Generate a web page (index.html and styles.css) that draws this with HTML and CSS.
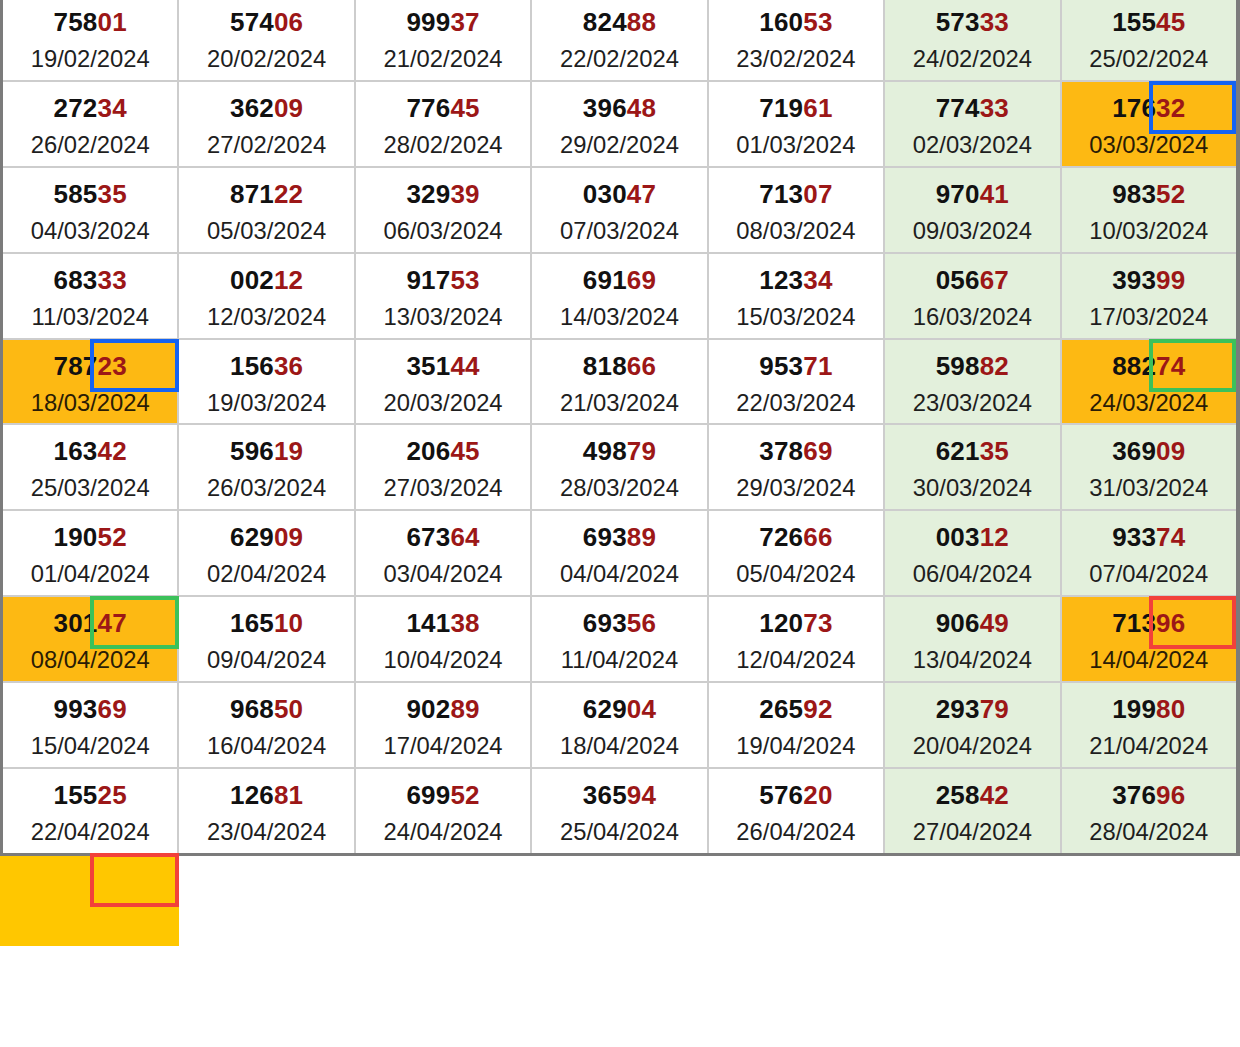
FILE: index.html
```html
<!DOCTYPE html>
<html>
<head>
<meta charset="utf-8">
<link rel="stylesheet" href="styles.css">
</head>
<body>
<div class="table">
  <div class="cell"><div class="num">758<span class="r">01</span></div><div class="date">19/02/2024</div></div>
  <div class="cell"><div class="num">574<span class="r">06</span></div><div class="date">20/02/2024</div></div>
  <div class="cell"><div class="num">999<span class="r">37</span></div><div class="date">21/02/2024</div></div>
  <div class="cell"><div class="num">824<span class="r">88</span></div><div class="date">22/02/2024</div></div>
  <div class="cell"><div class="num">160<span class="r">53</span></div><div class="date">23/02/2024</div></div>
  <div class="cell green"><div class="num">573<span class="r">33</span></div><div class="date">24/02/2024</div></div>
  <div class="cell green"><div class="num">155<span class="r">45</span></div><div class="date">25/02/2024</div></div>

  <div class="cell"><div class="num">272<span class="r">34</span></div><div class="date">26/02/2024</div></div>
  <div class="cell"><div class="num">362<span class="r">09</span></div><div class="date">27/02/2024</div></div>
  <div class="cell"><div class="num">776<span class="r">45</span></div><div class="date">28/02/2024</div></div>
  <div class="cell"><div class="num">396<span class="r">48</span></div><div class="date">29/02/2024</div></div>
  <div class="cell"><div class="num">719<span class="r">61</span></div><div class="date">01/03/2024</div></div>
  <div class="cell green"><div class="num">774<span class="r">33</span></div><div class="date">02/03/2024</div></div>
  <div class="cell hit"><div class="num">176<span class="r">32</span></div><div class="date">03/03/2024</div><span class="box blue edge-r"></span></div>

  <div class="cell"><div class="num">585<span class="r">35</span></div><div class="date">04/03/2024</div></div>
  <div class="cell"><div class="num">871<span class="r">22</span></div><div class="date">05/03/2024</div></div>
  <div class="cell"><div class="num">329<span class="r">39</span></div><div class="date">06/03/2024</div></div>
  <div class="cell"><div class="num">030<span class="r">47</span></div><div class="date">07/03/2024</div></div>
  <div class="cell"><div class="num">713<span class="r">07</span></div><div class="date">08/03/2024</div></div>
  <div class="cell green"><div class="num">970<span class="r">41</span></div><div class="date">09/03/2024</div></div>
  <div class="cell green"><div class="num">983<span class="r">52</span></div><div class="date">10/03/2024</div></div>

  <div class="cell"><div class="num">683<span class="r">33</span></div><div class="date">11/03/2024</div></div>
  <div class="cell"><div class="num">002<span class="r">12</span></div><div class="date">12/03/2024</div></div>
  <div class="cell"><div class="num">917<span class="r">53</span></div><div class="date">13/03/2024</div></div>
  <div class="cell"><div class="num">691<span class="r">69</span></div><div class="date">14/03/2024</div></div>
  <div class="cell"><div class="num">123<span class="r">34</span></div><div class="date">15/03/2024</div></div>
  <div class="cell green"><div class="num">056<span class="r">67</span></div><div class="date">16/03/2024</div></div>
  <div class="cell green"><div class="num">393<span class="r">99</span></div><div class="date">17/03/2024</div></div>

  <div class="cell hit"><div class="num">787<span class="r">23</span></div><div class="date">18/03/2024</div><span class="box blue"></span></div>
  <div class="cell"><div class="num">156<span class="r">36</span></div><div class="date">19/03/2024</div></div>
  <div class="cell"><div class="num">351<span class="r">44</span></div><div class="date">20/03/2024</div></div>
  <div class="cell"><div class="num">818<span class="r">66</span></div><div class="date">21/03/2024</div></div>
  <div class="cell"><div class="num">953<span class="r">71</span></div><div class="date">22/03/2024</div></div>
  <div class="cell green"><div class="num">598<span class="r">82</span></div><div class="date">23/03/2024</div></div>
  <div class="cell hit"><div class="num">882<span class="r">74</span></div><div class="date">24/03/2024</div><span class="box grn edge-r"></span></div>

  <div class="cell"><div class="num">163<span class="r">42</span></div><div class="date">25/03/2024</div></div>
  <div class="cell"><div class="num">596<span class="r">19</span></div><div class="date">26/03/2024</div></div>
  <div class="cell"><div class="num">206<span class="r">45</span></div><div class="date">27/03/2024</div></div>
  <div class="cell"><div class="num">498<span class="r">79</span></div><div class="date">28/03/2024</div></div>
  <div class="cell"><div class="num">378<span class="r">69</span></div><div class="date">29/03/2024</div></div>
  <div class="cell green"><div class="num">621<span class="r">35</span></div><div class="date">30/03/2024</div></div>
  <div class="cell green"><div class="num">369<span class="r">09</span></div><div class="date">31/03/2024</div></div>

  <div class="cell"><div class="num">190<span class="r">52</span></div><div class="date">01/04/2024</div></div>
  <div class="cell"><div class="num">629<span class="r">09</span></div><div class="date">02/04/2024</div></div>
  <div class="cell"><div class="num">673<span class="r">64</span></div><div class="date">03/04/2024</div></div>
  <div class="cell"><div class="num">693<span class="r">89</span></div><div class="date">04/04/2024</div></div>
  <div class="cell"><div class="num">726<span class="r">66</span></div><div class="date">05/04/2024</div></div>
  <div class="cell green"><div class="num">003<span class="r">12</span></div><div class="date">06/04/2024</div></div>
  <div class="cell green"><div class="num">933<span class="r">74</span></div><div class="date">07/04/2024</div></div>

  <div class="cell hit"><div class="num">301<span class="r">47</span></div><div class="date">08/04/2024</div><span class="box grn"></span></div>
  <div class="cell"><div class="num">165<span class="r">10</span></div><div class="date">09/04/2024</div></div>
  <div class="cell"><div class="num">141<span class="r">38</span></div><div class="date">10/04/2024</div></div>
  <div class="cell"><div class="num">693<span class="r">56</span></div><div class="date">11/04/2024</div></div>
  <div class="cell"><div class="num">120<span class="r">73</span></div><div class="date">12/04/2024</div></div>
  <div class="cell green"><div class="num">906<span class="r">49</span></div><div class="date">13/04/2024</div></div>
  <div class="cell hit"><div class="num">713<span class="r">96</span></div><div class="date">14/04/2024</div><span class="box red edge-r"></span></div>

  <div class="cell"><div class="num">993<span class="r">69</span></div><div class="date">15/04/2024</div></div>
  <div class="cell"><div class="num">968<span class="r">50</span></div><div class="date">16/04/2024</div></div>
  <div class="cell"><div class="num">902<span class="r">89</span></div><div class="date">17/04/2024</div></div>
  <div class="cell"><div class="num">629<span class="r">04</span></div><div class="date">18/04/2024</div></div>
  <div class="cell"><div class="num">265<span class="r">92</span></div><div class="date">19/04/2024</div></div>
  <div class="cell green"><div class="num">293<span class="r">79</span></div><div class="date">20/04/2024</div></div>
  <div class="cell green"><div class="num">199<span class="r">80</span></div><div class="date">21/04/2024</div></div>

  <div class="cell"><div class="num">155<span class="r">25</span></div><div class="date">22/04/2024</div></div>
  <div class="cell"><div class="num">126<span class="r">81</span></div><div class="date">23/04/2024</div></div>
  <div class="cell"><div class="num">699<span class="r">52</span></div><div class="date">24/04/2024</div></div>
  <div class="cell"><div class="num">365<span class="r">94</span></div><div class="date">25/04/2024</div></div>
  <div class="cell"><div class="num">576<span class="r">20</span></div><div class="date">26/04/2024</div></div>
  <div class="cell green"><div class="num">258<span class="r">42</span></div><div class="date">27/04/2024</div></div>
  <div class="cell green"><div class="num">376<span class="r">96</span></div><div class="date">28/04/2024</div></div>
</div>
<div class="next">
  <span class="box red next-box"></span>
</div>
</body>
</html>
```
FILE: styles.css
```css
html, body {
  margin: 0;
  padding: 0;
  background: #ffffff;
}

body {
  width: 1240px;
  height: 1047px;
  overflow: hidden;
  font-family: "Liberation Sans", Arial, sans-serif;
}

.table {
  margin-top: -4px;
  width: 1240px;
  box-sizing: border-box;
  display: grid;
  grid-template-columns: repeat(7, 1fr);
  grid-auto-rows: 83.9px;
  gap: 2px;
  background: #cdcdcd;
  border-left: 3px solid #7b7b7b;
  border-right: 4px solid #7b7b7b;
  border-bottom: 3px solid #7b7b7b;
}

.cell {
  position: relative;
  background: #ffffff;
  display: flex;
  flex-direction: column;
  align-items: center;
  padding-top: 11px;
  box-sizing: border-box;
}

.cell.green {
  background: #e3f0dc;
}

.cell.hit {
  background: #fdb913;
}

.num {
  font-weight: bold;
  font-size: 26px;
  line-height: 30px;
  color: #111111;
  letter-spacing: 0.2px;
}

.r {
  color: #9c1717;
}

.date {
  margin-top: 7px;
  font-size: 23.8px;
  line-height: 30px;
  color: #1e1e1e;
}

.cell.hit .date {
  color: #2a1c05;
}

.box {
  position: absolute;
  box-sizing: border-box;
  border: 4px solid;
  top: -1px;
  left: 87px;
  width: 89px;
  height: 53px;
}

.box.edge-r {
  left: 87px;
  width: 87px;
}

.box.blue {
  border-color: #1463f3;
}

.box.grn {
  border-color: #3cc15a;
}

.box.red {
  border-color: #f2413a;
}

.next {
  position: relative;
  width: 179px;
  height: 90px;
  background: #ffc700;
}

.next-box {
  top: -3px;
  left: 90px;
  width: 89px;
  height: 54px;
}
```
